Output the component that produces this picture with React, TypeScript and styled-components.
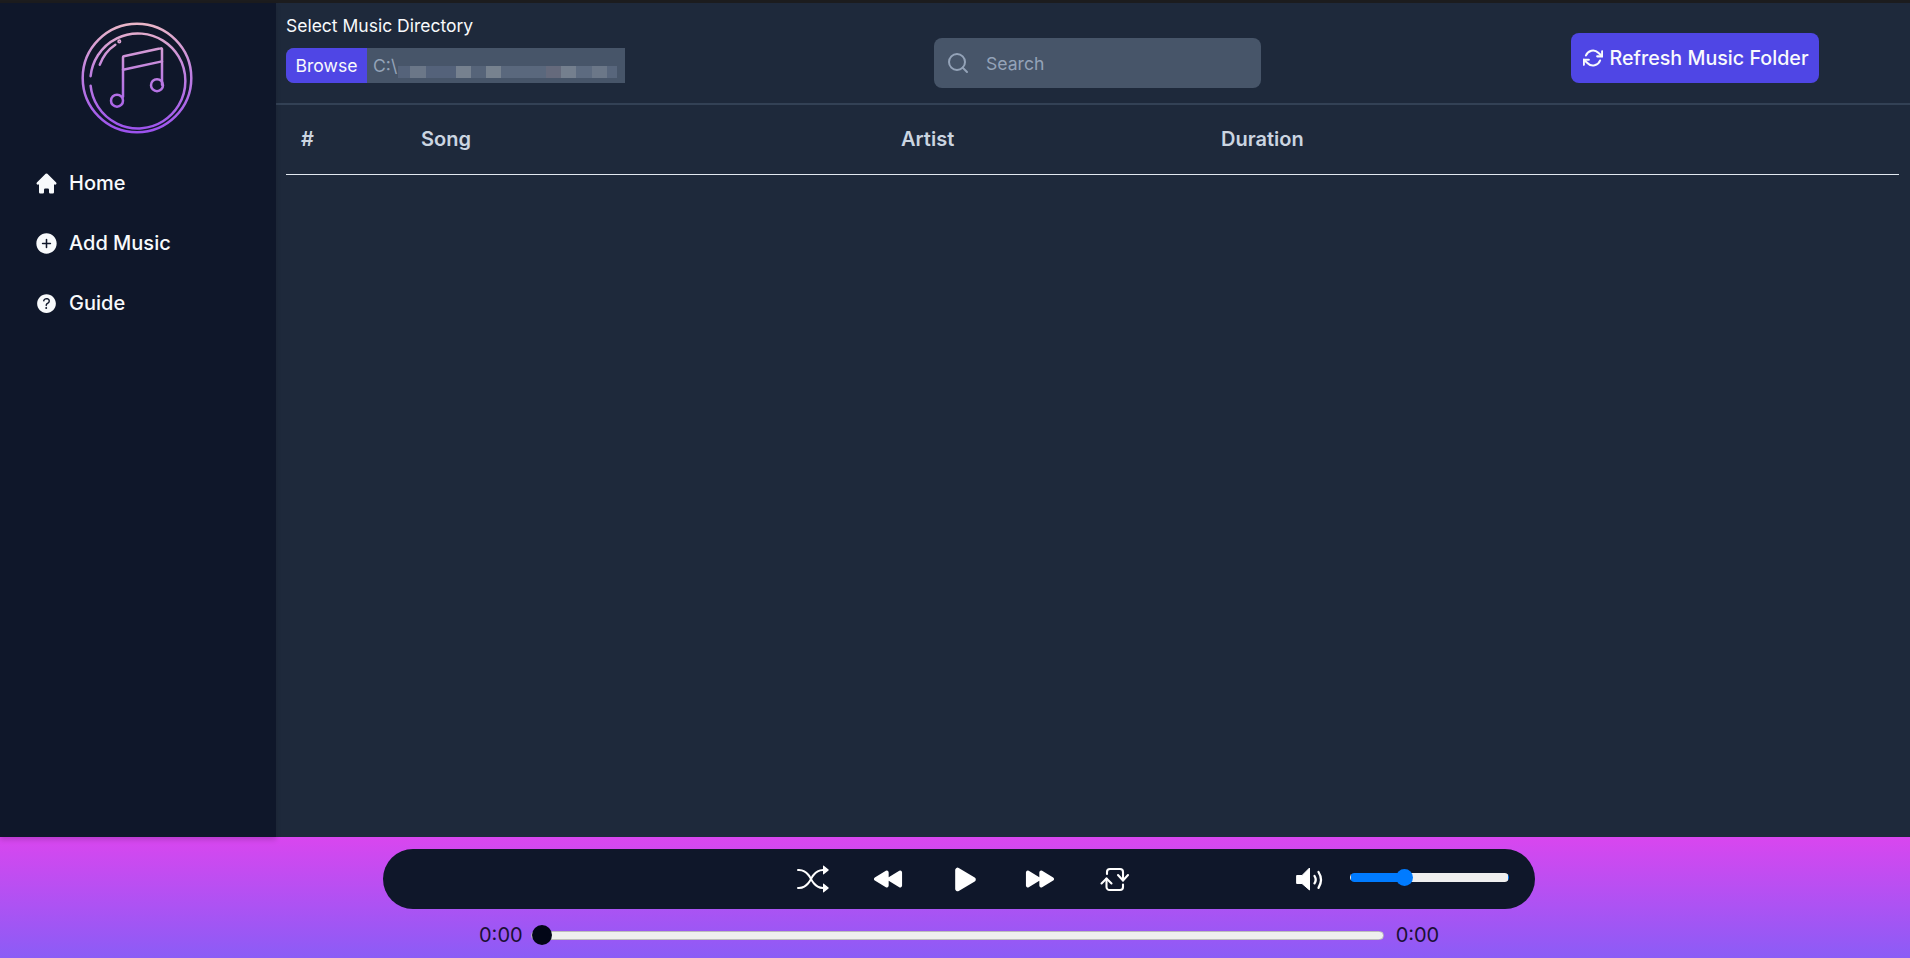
import React from 'react';
import styled, { createGlobalStyle } from 'styled-components';
import { HiHome } from 'react-icons/hi';
import { IoAddCircle, IoHelpCircle, IoPlay, IoPlayBack, IoPlayForward } from 'react-icons/io5';
import { BsShuffle } from 'react-icons/bs';
import { FiRefreshCw, FiSearch } from 'react-icons/fi';

const GlobalStyle = createGlobalStyle`
  html, body, #root { height: 100%; margin: 0; }
  body { font-family: Inter, "Liberation Sans", sans-serif; background: #0f172a; overflow: hidden; }
  * { box-sizing: border-box; }
`;

const Page = styled.div`
  height: 958px;
  display: flex;
  flex-direction: column;
`;

const TitleEdge = styled.div`
  height: 3px;
  background: #1c1c1e;
`;

const Body = styled.div`
  display: flex;
  height: 834px;
`;

const Sidebar = styled.aside`
  width: 276px;
  background: #0f172a;
  padding-top: 18px;
  box-shadow: 0 3px 5px rgba(0, 0, 0, 0.15);
  position: relative;
`;

const LogoWrap = styled.div`
  display: flex;
  justify-content: center;
  padding-right: 2px;
`;

const Nav = styled.nav`
  display: flex;
  flex-direction: column;
  margin-top: 18px;
`;

const NavItem = styled.a`
  height: 60px;
  display: flex;
  align-items: center;
  gap: 10px;
  padding-left: 34px;
  color: #f8fafc;
  font-size: 20px;
  font-weight: 500;
`;

const Main = styled.main`
  flex: 1;
  background: #1e293b;
`;

const Header = styled.header`
  height: 102px;
  border-bottom: 2px solid #334155;
  padding: 12px 91px 0 10px;
  display: flex;
  justify-content: space-between;
  align-items: flex-start;
`;

const Directory = styled.div`
  width: 338px;
`;

const DirectoryLabel = styled.div`
  color: #f8fafc;
  font-size: 17.5px;
  line-height: 22px;
  margin-bottom: 11px;
`;

const FileRow = styled.div`
  width: 339px;
  height: 35px;
  display: flex;
  background: #475569;
  border-radius: 8px 0 0 8px;
`;

const BrowseButton = styled.button`
  width: 81px;
  border: 0;
  padding: 0;
  background: #4f46e5;
  color: #f8fafc;
  font: 400 17.6px Inter, sans-serif;
  border-radius: 8px 0 0 8px;
`;

const PathText = styled.span`
  color: #94a3b8;
  font-size: 17.6px;
  line-height: 35px;
  padding-left: 6px;
  width: 31px;
  white-space: nowrap;
`;

const Mosaic = styled.div`
  display: flex;
  align-self: center;
  margin-top: 13px;
  height: 12px;
  filter: blur(0.6px);
`;

const MosaicCell = styled.span<{ $w: number; $c: string }>`
  width: ${(p) => p.$w}px;
  background: ${(p) => p.$c};
`;

const SearchBox = styled.label`
  width: 327px;
  height: 50px;
  margin-top: 23px;
  background: #475569;
  border-radius: 8px;
  display: flex;
  align-items: center;
  gap: 16px;
  padding-left: 12px;
  color: #94a3b8;
`;

const SearchInput = styled.input`
  border: 0;
  outline: 0;
  padding: 0;
  background: transparent;
  font: 400 17.6px Inter, sans-serif;
  color: #f8fafc;
  width: 240px;
  &::placeholder { color: #94a3b8; opacity: 1; }
`;

const RefreshButton = styled.button`
  width: 248px;
  height: 50px;
  margin-top: 18px;
  border: 0;
  padding: 0 0 0 2px;
  background: #4f46e5;
  color: #f8fafc;
  border-radius: 8px;
  font: 500 19.7px Inter, sans-serif;
  display: flex;
  align-items: center;
  justify-content: center;
  gap: 6px;
`;

const Table = styled.div`
  margin: 0 11px 0 10px;
`;

const TableHead = styled.div`
  height: 70px;
  padding: 0 0 2px 15px;
  border-bottom: 1px solid #e2e8f0;
  display: grid;
  grid-template-columns: 120px 480px 320px 1fr;
  align-items: center;
  color: #cbd5e1;
  font-size: 20px;
  font-weight: 600;
`;

const Player = styled.footer`
  height: 121px;
  background: linear-gradient(to bottom, #d946ef, #8b5cf6);
  padding-top: 12px;
`;

const Pill = styled.div`
  width: 1152px;
  height: 60px;
  margin-left: 383px;
  border-radius: 30px;
  background: #0f172a;
  display: flex;
  align-items: center;
  padding-left: 392px;
`;

const ControlButton = styled.button`
  width: 75.6px;
  height: 60px;
  border: 0;
  padding: 0;
  background: transparent;
  color: #fff;
  display: flex;
  align-items: center;
  justify-content: center;
`;

const PlayButton = styled(ControlButton)`
  padding-left: 3px;
`;

const VolumeIcon = styled.span`
  color: #fff;
  display: flex;
  margin-left: 137px;
  width: 60px;
`;

const Slider = styled.input<{ $fill: number; $thumb: number; $thumbColor: string; $edge: string }>`
  appearance: none;
  -webkit-appearance: none;
  margin: 0;
  height: 20px;
  background: transparent;
  &::-webkit-slider-runnable-track {
    height: 9px;
    border-radius: 5px;
    border: 1px solid ${(p) => p.$edge};
    background: linear-gradient(to right, #007bff ${(p) => p.$fill}%, #efefef ${(p) => p.$fill}%);
  }
  &::-webkit-slider-thumb {
    -webkit-appearance: none;
    width: ${(p) => p.$thumb}px;
    height: ${(p) => p.$thumb}px;
    margin-top: ${(p) => -(p.$thumb - 7) / 2}px;
    border-radius: 50%;
    background: ${(p) => p.$thumbColor};
    border: 0;
  }
`;

const VolumeSlider = styled(Slider)`
  width: 159px;
  margin-top: -3px;
`;

const SeekRow = styled.div`
  display: flex;
  align-items: center;
  margin: 9px 0 0 479px;
  gap: 8px;
  height: 34px;
`;

const TimeText = styled.span`
  color: #1a1033;
  font-size: 20px;
  line-height: 24px;
`;

const SeekSlider = styled(Slider)`
  width: 853px;
  margin-right: 4px;
`;

const mosaicCells: [number, string][] = [
  [12, '#55637a'], [16, '#6b7788'], [30, '#54627a'], [15, '#76818f'], [15, '#566479'], [15, '#77828f'],
  [45, '#5a687d'], [15, '#656a7c'], [15, '#747f8e'], [16, '#5d6b80'], [15, '#6b7788'], [10, '#58667c'],
];

const Logo = () => (
  <svg width="114" height="114" viewBox="9.7 11.3 114 114" fill="none" stroke="url(#logoGrad)" strokeWidth="2.5" strokeLinecap="round" strokeLinejoin="round">
    <defs>
      <linearGradient id="logoGrad" gradientUnits="userSpaceOnUse" x1="66" y1="14" x2="66" y2="122">
        <stop offset="0" stopColor="#eab6c8" />
        <stop offset="0.45" stopColor="#c081e0" />
        <stop offset="1" stopColor="#9c52ee" />
      </linearGradient>
    </defs>
    <circle cx="66.7" cy="68.3" r="54.3" />
    <path d="M20.3 76 A47.5 47.5 0 1 0 20.3 66.5" />
    <path d="M29.5 55 A40 40 0 0 1 45 35" />
    <circle cx="49" cy="31.7" r="0.8" />
    <path d="M52.7 87 V47.5 Q52.7 46.7 53.5 46.5 L90.5 38.6 Q91.7 38.3 91.7 39.5 V75" />
    <path d="M52.7 60 L91.7 51.7" />
    <circle cx="46.7" cy="91" r="6" />
    <circle cx="86.7" cy="75.5" r="6" />
  </svg>
);

const RepeatIcon = () => (
  <svg width="50" height="40" viewBox="0 0 50 40" fill="none" stroke="currentColor" strokeWidth="2.1" strokeLinecap="round" strokeLinejoin="round">
    <path d="M17 15 V13 a3 3 0 0 1 3-3 H30 a3 3 0 0 1 3 3 V21.5" />
    <path d="M28 16 L33 21.5 L38 16" />
    <path d="M16.5 19.5 V28 a3 3 0 0 0 3 3 H30 a3 3 0 0 0 3-3 V25.5" />
    <path d="M11.5 24.5 L16.5 19.5 L21.5 24.5" />
  </svg>
);

const SpeakerIcon = () => (
  <svg width="40" height="40" viewBox="0 0 40 40" fill="none" stroke="currentColor" strokeWidth="2.3" strokeLinecap="round">
    <path d="M7 16.5 H12 L19.5 9 V31 L12 24.5 H7 Z" fill="currentColor" stroke="currentColor" strokeWidth="1" strokeLinejoin="round" />
    <path d="M24.5 17 q2.4 3.8 0 7.4" />
    <path d="M28.5 13 q5 7.8 0 15.8" />
  </svg>
);

export default function App() {
  return (
    <Page>
      <GlobalStyle />
      <TitleEdge />
      <Body>
        <Sidebar>
          <LogoWrap><Logo /></LogoWrap>
          <Nav>
            <NavItem><HiHome size={25} />Home</NavItem>
            <NavItem><IoAddCircle size={25} />Add Music</NavItem>
            <NavItem><IoHelpCircle size={25} />Guide</NavItem>
          </Nav>
        </Sidebar>
        <Main>
          <Header>
            <Directory>
              <DirectoryLabel>Select Music Directory</DirectoryLabel>
              <FileRow>
                <BrowseButton>Browse</BrowseButton>
                <PathText>C:\</PathText>
                <Mosaic>
                  {mosaicCells.map(([w, c], i) => <MosaicCell key={i} $w={w} $c={c} />)}
                </Mosaic>
              </FileRow>
            </Directory>
            <SearchBox>
              <FiSearch size={24} />
              <SearchInput placeholder="Search" />
            </SearchBox>
            <RefreshButton><FiRefreshCw size={20} strokeWidth={2.5} />Refresh Music Folder</RefreshButton>
          </Header>
          <Table>
            <TableHead>
              <span>#</span>
              <span>Song</span>
              <span>Artist</span>
              <span>Duration</span>
            </TableHead>
          </Table>
        </Main>
      </Body>
      <Player>
        <Pill>
          <ControlButton><BsShuffle size={32} /></ControlButton>
          <ControlButton><IoPlayBack size={30} /></ControlButton>
          <PlayButton><IoPlay size={33} /></PlayButton>
          <ControlButton><IoPlayForward size={30} /></ControlButton>
          <ControlButton><RepeatIcon /></ControlButton>
          <VolumeIcon><SpeakerIcon /></VolumeIcon>
          <VolumeSlider type="range" min={0} max={100} defaultValue={32} $fill={34} $thumb={17} $thumbColor="#007bff" $edge="transparent" />
        </Pill>
        <SeekRow>
          <TimeText>0:00</TimeText>
          <SeekSlider type="range" min={0} max={100} defaultValue={0} $fill={0} $thumb={20} $thumbColor="#020617" $edge="#bdbdbd" />
          <TimeText>0:00</TimeText>
        </SeekRow>
      </Player>
    </Page>
  );
}
